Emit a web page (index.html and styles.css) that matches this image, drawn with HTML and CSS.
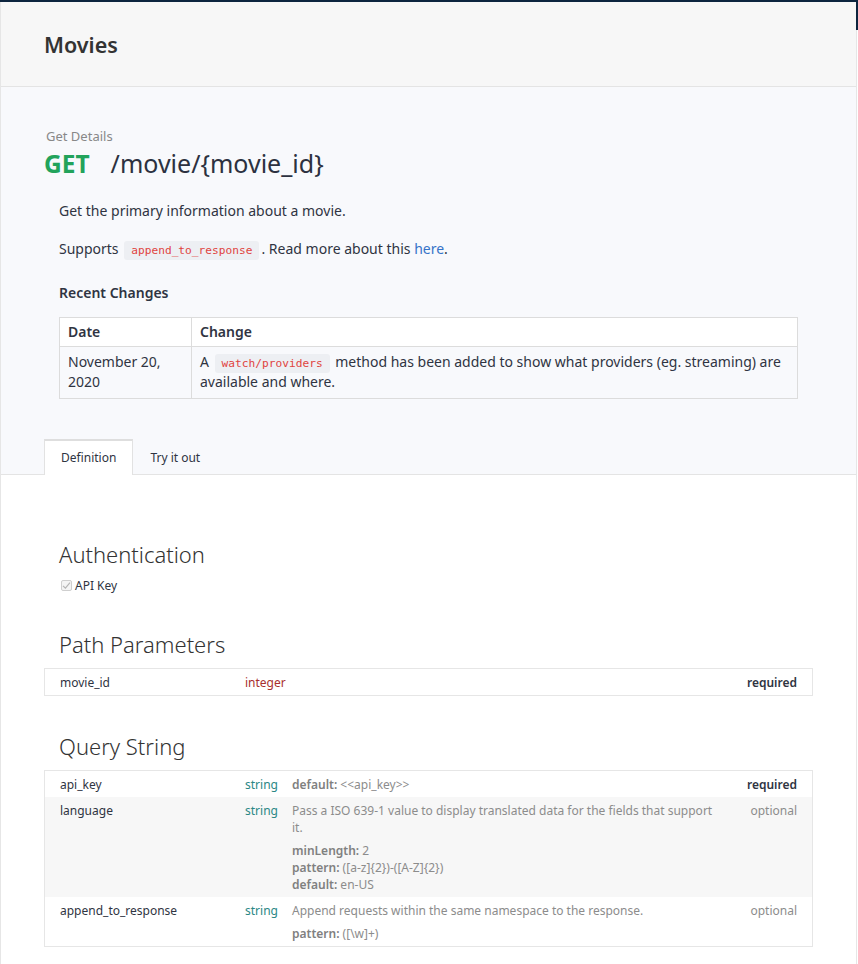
FILE: index.html
```html
<!DOCTYPE html>
<html lang="en">
<head>
<meta charset="utf-8">
<title>Movies - Get Details</title>
<link rel="stylesheet" href="styles.css">
</head>
<body>
<div class="topbar"></div>
<div class="edge"></div>
<div class="page">
  <header class="page-header">
    <h1 class="page-title">Movies</h1>
  </header>

  <section class="endpoint">
    <div class="endpoint-label">Get Details</div>
    <div class="endpoint-line">
      <span class="method">GET</span>
      <span class="path">/movie/{movie_id}</span>
    </div>

    <div class="doc">
      <p class="doc-p first">Get the primary information about a movie.</p>
      <p class="doc-p">Supports <code class="code">append_to_response</code>. Read more about this <a class="link" href="#">here</a>.</p>
      <h3 class="doc-h">Recent Changes</h3>
      <table class="changes">
        <thead>
          <tr><th class="col-date">Date</th><th>Change</th></tr>
        </thead>
        <tbody>
          <tr>
            <td class="col-date">November 20, 2020</td>
            <td>A <code class="code">watch/providers</code> method has been added to show what providers (eg. streaming) are available and where.</td>
          </tr>
        </tbody>
      </table>
    </div>

    <nav class="tabs">
      <div class="tab active">Definition</div>
      <div class="tab">Try it out</div>
    </nav>
  </section>

  <main class="definition">
    <h2 class="def-h first">Authentication</h2>
    <div class="auth">
      <span class="check"><svg width="9" height="9" viewBox="0 0 9 9"><path d="M1 4.8 L3.4 7.2 L8 1.6" fill="none" stroke="#b5b5b5" stroke-width="1.2"/></svg></span>
      <span>API Key</span>
    </div>

    <h2 class="def-h">Path Parameters</h2>
    <div class="params">
      <div class="param">
        <div class="p-name">movie_id</div>
        <div class="p-type int">integer</div>
        <div class="p-desc"></div>
        <div class="p-req">required</div>
      </div>
    </div>

    <h2 class="def-h">Query String</h2>
    <div class="params">
      <div class="param">
        <div class="p-name">api_key</div>
        <div class="p-type">string</div>
        <div class="p-desc"><span class="meta"><b>default:</b> &lt;&lt;api_key&gt;&gt;</span></div>
        <div class="p-req">required</div>
      </div>
      <div class="param alt">
        <div class="p-name">language</div>
        <div class="p-type">string</div>
        <div class="p-desc">
          <div>Pass a ISO 639-1 value to display translated data for the fields that support it.</div>
          <div class="meta-block">
            <div><b>minLength:</b> 2</div>
            <div><b>pattern:</b> ([a-z]{2})-([A-Z]{2})</div>
            <div><b>default:</b> en-US</div>
          </div>
        </div>
        <div class="p-opt">optional</div>
      </div>
      <div class="param">
        <div class="p-name">append_to_response</div>
        <div class="p-type">string</div>
        <div class="p-desc">
          <div>Append requests within the same namespace to the response.</div>
          <div class="meta-block">
            <div><b>pattern:</b> ([\w]+)</div>
          </div>
        </div>
        <div class="p-opt">optional</div>
      </div>
    </div>
  </main>
</div>
</body>
</html>
```

FILE: styles.css
```css
* { box-sizing: border-box; }

html, body {
  margin: 0;
  padding: 0;
  background: #ffffff;
  font-family: "Noto Sans", "Open Sans", "Liberation Sans", sans-serif;
  color: #2f3442;
}

.topbar {
  height: 2px;
  background: #0d253f;
}

.edge {
  position: absolute;
  top: 0;
  right: 0;
  width: 2px;
  height: 30px;
  background: #0d253f;
}

.page {
  width: 857px;
  border-left: 1px solid #e6e6e6;
  border-right: 1px solid #e6e6e6;
  min-height: 962px;
}

.page-header {
  background: #f7f7f7;
  border-bottom: 1px solid #e4e4e4;
  height: 85px;
  padding: 28px 43px 0;
}

.page-title {
  margin: 0;
  font-size: 21.5px;
  line-height: 30px;
  font-weight: 600;
  color: #333333;
}

.endpoint {
  background: #f8f9fc;
  padding: 40px 43px 0;
  border-bottom: 1px solid #e4e4e4;
}

.endpoint-label {
  font-size: 13px;
  line-height: 18px;
  color: #888888;
  padding-left: 2px;
}

.endpoint-line {
  display: flex;
  align-items: baseline;
  gap: 21px;
  font-size: 24.5px;
  line-height: 32px;
  margin-top: 2px;
}

.method {
  color: #22a35b;
  font-weight: 700;
}

.path {
  color: #2c3140;
  font-size: 25px;
}

.doc {
  padding: 0 15px;
  font-size: 14px;
  line-height: 20px;
  color: #2f3442;
}

.doc-p {
  margin: 18px 0 0;
}

.doc-p.first {
  margin-top: 21px;
}

.code {
  font-family: "DejaVu Sans Mono", "Liberation Mono", monospace;
  font-size: 11.2px;
  line-height: 12px;
  color: #e0443f;
  background: #edeff3;
  border-radius: 3px;
  padding: 3px 7px;
  margin: 0 2px;
}

.link {
  color: #3673c8;
  text-decoration: none;
}

.doc-h {
  margin: 24px 0 0;
  font-size: 14px;
  line-height: 20px;
  font-weight: 600;
}

.changes {
  margin-top: 14px;
  width: 100%;
  border-collapse: collapse;
  font-size: 14px;
  line-height: 20px;
}

.changes th,
.changes td {
  border: 1px solid #dcdcdc;
  padding: 5px 8px 6px;
  text-align: left;
  vertical-align: top;
}

.changes th {
  background: #ffffff;
  font-weight: 600;
  padding: 4px 8px 4px;
}

.changes td {
  background: #f8f9fc;
}

.col-date {
  width: 132px;
}

.tabs {
  display: flex;
  margin-top: 40px;
  margin-bottom: -1px;
  font-size: 12px;
  line-height: 18px;
}

.tab {
  padding: 8px 16px 7px 16px;
  border-top: 2px solid transparent;
  border-left: 1px solid transparent;
  border-right: 1px solid transparent;
  color: #2f3442;
  height: 36px;
}

.tab.active {
  background: #ffffff;
  border-top-color: #dedede;
  border-left-color: #e2e2e2;
  border-right-color: #e2e2e2;
}

.definition {
  padding: 64px 43px 16px;
}

.def-h {
  margin: 35px 0 0;
  padding-left: 15px;
  font-size: 22px;
  line-height: 30px;
  font-weight: 300;
  color: #333333;
}

.def-h.first {
  margin-top: 0;
}

.auth {
  display: flex;
  align-items: center;
  gap: 3px;
  margin-top: 8px;
  padding-left: 17px;
  font-size: 12px;
  line-height: 17px;
  color: #2f3442;
}

.check {
  width: 11px;
  height: 11px;
  border: 1px solid #cfcfcf;
  border-radius: 2px;
  background: #f4f4f4;
  display: flex;
  align-items: center;
  justify-content: center;
}

.params {
  margin-top: 9px;
  border: 1px solid #e6e6e6;
  font-size: 12px;
  line-height: 17px;
}

.param {
  display: grid;
  grid-template-columns: 200px 47px 1fr 70px;
  padding: 5px 15px 4px 0;
}

.param.alt {
  background: #f7f7f7;
}

.p-name {
  padding-left: 15px;
  color: #2f3442;
}

.p-type {
  color: #2a8785;
}

.p-type.int {
  color: #a8302e;
}

.p-desc {
  color: #8c8c8c;
  padding-right: 12px;
}

.p-desc b,
.meta b {
  font-weight: 600;
  color: #808080;
}

.meta-block {
  margin-top: 6px;
}

.p-req {
  text-align: right;
  font-weight: 600;
  color: #2f3442;
}

.p-opt {
  text-align: right;
  color: #8c8c8c;
}
```
